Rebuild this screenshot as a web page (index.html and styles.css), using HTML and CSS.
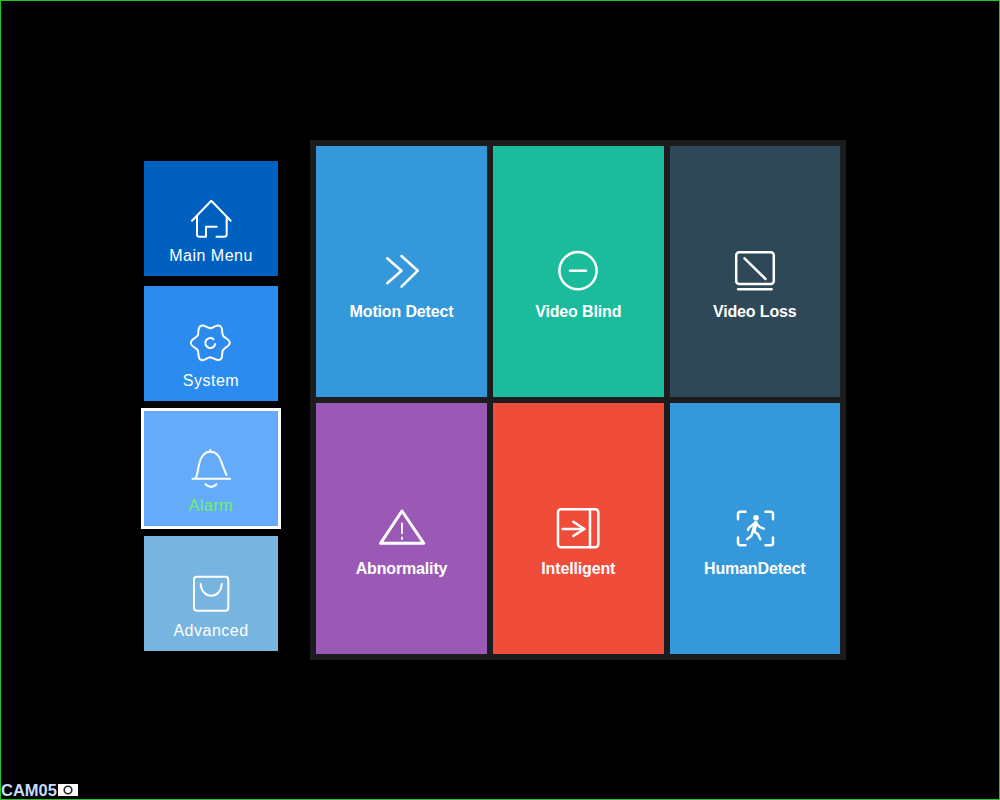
FILE: index.html
```html
<!DOCTYPE html>
<html lang="en">
<head>
    <meta charset="UTF-8">
    <title>Alarm</title>
    <link rel="stylesheet" href="styles.css">
</head>
<body>
    <div class="screen">
        <main class="desk">
            <nav class="side-menu">
                <a href="#" class="side-tile tile-main">
                    <svg class="icon thin" viewBox="0 0 44 44"><path d="M3 23.7L22.3 3.7L41.7 23.7"/><path d="M8 19V37.2a2.5 2.5 0 0 0 2.5 2.5H17V29.7H27.7"/><path d="M37.7 20V37.2a2.5 2.5 0 0 1-2.5 2.5H27.5"/></svg>
                    <span class="side-label">Main Menu</span>
                </a>
                <a href="#" class="side-tile tile-system">
                    <svg class="icon thin" viewBox="0 0 44 44">
                        <path id="gear-lobe" d="M21.3 6.3C24.3 6.3 26.8 2.4 30.3 3.6C34.8 5.2 32 10.7 34 12.9"/>
                        <use href="#gear-lobe" transform="rotate(60 21.3 20.8)"/>
                        <use href="#gear-lobe" transform="rotate(120 21.3 20.8)"/>
                        <use href="#gear-lobe" transform="rotate(180 21.3 20.8)"/>
                        <use href="#gear-lobe" transform="rotate(240 21.3 20.8)"/>
                        <use href="#gear-lobe" transform="rotate(300 21.3 20.8)"/>
                        <path d="M24.5 17.2A5 5 0 1 0 26.2 22"/>
                    </svg>
                    <span class="side-label">System</span>
                </a>
                <a href="#" class="side-tile tile-alarm active">
                    <svg class="icon thin" viewBox="0 0 44 44"><path d="M7 31C9.5 23 9 20 11 14C13 8 17 4.7 21.3 4.7C26 4.7 30 8 32 14C34 20 35.5 23 37.5 28"/><path d="M21.3 3V4.7"/><path d="M3.5 31.7H41"/><path d="M16.5 37.3Q22 42.5 27.5 37.3"/></svg>
                    <span class="side-label">Alarm</span>
                </a>
                <a href="#" class="side-tile tile-advanced">
                    <svg class="icon thin" viewBox="0 0 44 44"><rect x="5" y="4.7" width="34.3" height="34" rx="3"/><path d="M11.7 12C12.5 27.5 32 27.5 32.7 12"/></svg>
                    <span class="side-label">Advanced</span>
                </a>
            </nav>

            <section class="grid-panel">
                <a href="#" class="grid-tile tile-motion">
                    <svg class="icon" viewBox="0 0 44 44"><path d="M7.2 9.3L21.5 21.7L7.2 34.3"/><path d="M21.5 7L37.8 21.7L21.5 37.7"/></svg>
                    <span class="grid-label">Motion Detect</span>
                </a>
                <a href="#" class="grid-tile tile-blind">
                    <svg class="icon" viewBox="0 0 44 44"><circle cx="22" cy="21.7" r="18.6"/><path d="M14 21.7H30"/></svg>
                    <span class="grid-label">Video Blind</span>
                </a>
                <a href="#" class="grid-tile tile-loss">
                    <svg class="icon" viewBox="0 0 44 44"><rect x="3.2" y="3.3" width="37.6" height="31.7" rx="3"/><path d="M11.5 9.3L32.5 30"/><path d="M5.2 40.3H38.5"/></svg>
                    <span class="grid-label">Video Loss</span>
                </a>
                <a href="#" class="grid-tile tile-abnormal">
                    <svg class="icon heavy" viewBox="0 0 44 44"><path d="M22 5L43.8 37.3H0.5Z"/><path class="fine" d="M22 17.3V27.3"/><path class="fine" d="M22 31.5V33"/></svg>
                    <span class="grid-label">Abnormality</span>
                </a>
                <a href="#" class="grid-tile tile-intelligent">
                    <svg class="icon" viewBox="0 0 44 44"><rect x="2" y="3.3" width="40.3" height="38" rx="3"/><path d="M34 3.3V41.3"/><path d="M6.7 23H28.3"/><path d="M17.3 15.7L28.3 23L17.3 30"/></svg>
                    <span class="grid-label">Intelligent</span>
                </a>
                <a href="#" class="grid-tile tile-human">
                    <svg class="icon" viewBox="0 0 44 44"><path d="M5 13.2V8a2.3 2.3 0 0 1 2.3-2.3H12.5"/><path d="M32.5 5.7H37.7A2.3 2.3 0 0 1 40 8V13.2"/><path d="M5 31.5V36.9A2.3 2.3 0 0 0 7.3 39.2H12.5"/><path d="M32.5 39.2H37.7A2.3 2.3 0 0 0 40 36.9V31.5"/><circle class="solid" cx="23" cy="11.7" r="2.8"/><path class="torso" d="M22.7 17L20.7 25"/><path class="limb" d="M22.5 16.5L16 21.7L15 24"/><path class="limb" d="M23 17L26.7 21L30.7 22.7"/><path class="limb" d="M20 25L18.3 30L14 33.3"/><path class="limb" d="M20.7 25L25 28.3L27.3 33.3"/></svg>
                    <span class="grid-label">HumanDetect</span>
                </a>
            </section>
        </main>

        <footer class="status-bar">
            <span class="cam-name">CAM05</span>
            <span class="cam-badge"><svg class="cam-icon" viewBox="0 0 20 12"><circle cx="10" cy="6" r="3.8"/></svg></span>
        </footer>
    </div>
</body>
</html>
```
FILE: styles.css
```css
body {
    margin: 0;
    background-color: #000;
    font-family: 'Liberation Sans', Arial, sans-serif;
}
a {
    color: white;
    text-decoration: none;
}
.screen {
    box-sizing: border-box;
    width: 1000px;
    height: 800px;
    border: 1px solid #22c822;
    display: flex;
    flex-direction: column;
}
.desk {
    display: flex;
    align-items: flex-start;
    gap: 32px;
    padding: 139px 0 0 143px;
}
.side-menu {
    display: flex;
    flex-direction: column;
    gap: 10px;
    margin-top: 21px;
}
.side-tile {
    box-sizing: border-box;
    width: 134px;
    height: 115px;
    padding-top: 36px;
    display: flex;
    flex-direction: column;
    align-items: center;
}
.side-tile.active {
    outline: 3px solid white;
    color: #6df06d;
}
.side-label {
    margin-top: 6px;
    font-size: 16px;
    line-height: 18px;
    letter-spacing: 0.5px;
}
.tile-main { background-color: #0060c0; }
.tile-system { background-color: #2b8bee; }
.tile-alarm { background-color: #64acfa; }
.tile-advanced { background-color: #78b4e0; }

.grid-panel {
    display: grid;
    grid-template-columns: 171px 170.5px 170.5px;
    grid-template-rows: repeat(2, 251px);
    gap: 6px;
    padding: 6px;
    background-color: #1c1c1e;
}
.grid-tile {
    box-sizing: border-box;
    padding-top: 103px;
    display: flex;
    flex-direction: column;
    align-items: center;
}
.grid-label {
    margin-top: 9px;
    font-size: 16px;
    font-weight: bold;
    line-height: 20px;
    letter-spacing: -0.15px;
}
.tile-motion, .tile-human { background-color: #3498db; }
.tile-blind { background-color: #1abc9c; }
.tile-loss { background-color: #2f4858; }
.tile-abnormal { background-color: #9b59b6; }
.tile-intelligent { background-color: #f04c3a; }

.icon {
    width: 44px;
    height: 44px;
    overflow: visible;
    fill: none;
    stroke: white;
    stroke-width: 2.5;
    stroke-linecap: round;
    stroke-linejoin: round;
}
.icon.thin { stroke-width: 2; }
.icon.heavy { stroke-width: 3; }
.icon .fine { stroke-width: 1.8; }
.icon .limb { stroke-width: 2.4; }
.icon .torso { stroke-width: 4; }
.icon .solid { fill: white; stroke: none; }

.status-bar {
    margin-top: auto;
    margin-bottom: 1px;
    display: flex;
    align-items: center;
    gap: 1px;
    height: 16px;
}
.cam-name {
    color: #c4dcff;
    font-size: 16.5px;
    font-weight: bold;
    line-height: 16px;
}
.cam-badge {
    display: flex;
    width: 20px;
    height: 12px;
    background-color: white;
}
.cam-icon {
    width: 20px;
    height: 12px;
    fill: none;
    stroke: #222;
    stroke-width: 1.6;
}
```
